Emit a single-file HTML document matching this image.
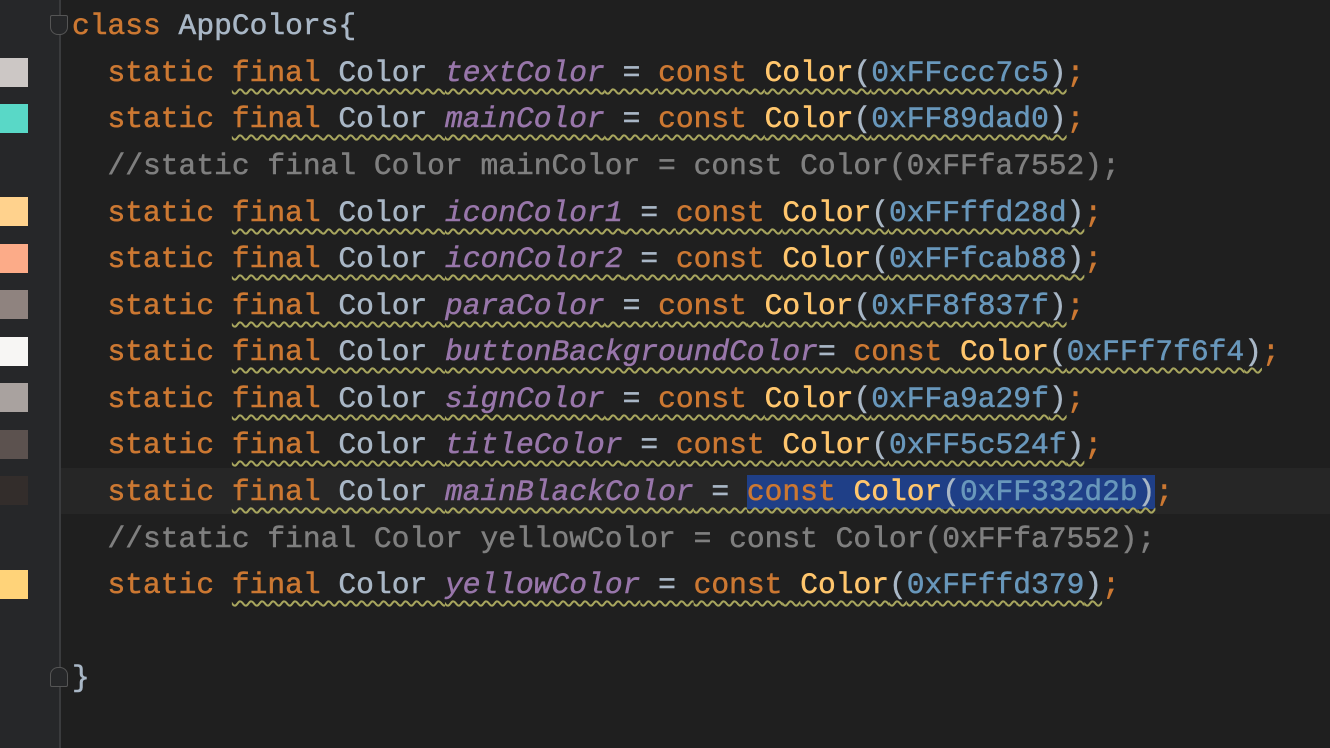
<!DOCTYPE html>
<html><head><style>
body{margin:0;width:1330px;height:748px;background:#1f1f1f;overflow:hidden;position:relative;font-family:"Liberation Mono",monospace;}
.gut{position:absolute;left:0;top:0;width:59px;height:748px;background:#262729;}
.gl{position:absolute;left:59px;top:0;width:2px;height:748px;background:#3a3b3d;}
.cur{position:absolute;left:61px;top:468px;width:1269px;height:46px;background:#262626;}
.sw{position:absolute;left:0;width:28px;height:29px;}
.l{position:absolute;left:72px;height:46px;line-height:46px;font-size:29.6px;white-space:pre;color:#a9b7c6;-webkit-text-stroke:0.5px currentColor;}
.k{color:#cc7832}.c{color:#ffc66d}.n{color:#6897bb}.f{color:#9876aa;font-style:italic}.cm{color:#7f7f7f}
.w{text-decoration:underline wavy #a8a65e;text-decoration-thickness:1.5px;text-underline-offset:7px;}
.sel{background:#1f3f87;}
.fold{position:absolute;left:50px;width:18px;height:20px;border:1.5px solid #555;box-sizing:border-box;background:#262729;}
</style></head><body>
<div class="gut"></div><div class="gl"></div><div class="cur"></div>
<div class="fold" style="top:15px;border-radius:2px 2px 8px 8px"></div>
<div class="fold" style="top:667px;border-radius:8px 8px 2px 2px"></div>
<div class="sw" style="top:58px;background:#ccc7c5"></div>
<div class="sw" style="top:104px;background:#59d8c7"></div>
<div class="sw" style="top:197px;background:#ffd28d"></div>
<div class="sw" style="top:244px;background:#fcab88"></div>
<div class="sw" style="top:290px;background:#8f837f"></div>
<div class="sw" style="top:337px;background:#f7f6f4"></div>
<div class="sw" style="top:383px;background:#a9a29f"></div>
<div class="sw" style="top:430px;background:#5c524f"></div>
<div class="sw" style="top:476px;background:#332d2b"></div>
<div class="sw" style="top:570px;background:#ffd379"></div>
<div class="l" style="top:3px"><span class="k">class</span> AppColors{</div>
<div class="l" style="top:50px">  <span class="k">static</span> <span class="w"><span class="k">final</span> Color <span class="f">textColor</span> = <span class="k">const</span> <span class="c">Color</span>(<span class="n">0xFFccc7c5</span>)</span><span class="k">;</span></div>
<div class="l" style="top:96px">  <span class="k">static</span> <span class="w"><span class="k">final</span> Color <span class="f">mainColor</span> = <span class="k">const</span> <span class="c">Color</span>(<span class="n">0xFF89dad0</span>)</span><span class="k">;</span></div>
<div class="l cm" style="top:143px">  //static final Color mainColor = const Color(0xFFfa7552);</div>
<div class="l" style="top:190px">  <span class="k">static</span> <span class="w"><span class="k">final</span> Color <span class="f">iconColor1</span> = <span class="k">const</span> <span class="c">Color</span>(<span class="n">0xFFffd28d</span>)</span><span class="k">;</span></div>
<div class="l" style="top:236px">  <span class="k">static</span> <span class="w"><span class="k">final</span> Color <span class="f">iconColor2</span> = <span class="k">const</span> <span class="c">Color</span>(<span class="n">0xFFfcab88</span>)</span><span class="k">;</span></div>
<div class="l" style="top:283px">  <span class="k">static</span> <span class="w"><span class="k">final</span> Color <span class="f">paraColor</span> = <span class="k">const</span> <span class="c">Color</span>(<span class="n">0xFF8f837f</span>)</span><span class="k">;</span></div>
<div class="l" style="top:329px">  <span class="k">static</span> <span class="w"><span class="k">final</span> Color <span class="f">buttonBackgroundColor</span>= <span class="k">const</span> <span class="c">Color</span>(<span class="n">0xFFf7f6f4</span>)</span><span class="k">;</span></div>
<div class="l" style="top:376px">  <span class="k">static</span> <span class="w"><span class="k">final</span> Color <span class="f">signColor</span> = <span class="k">const</span> <span class="c">Color</span>(<span class="n">0xFFa9a29f</span>)</span><span class="k">;</span></div>
<div class="l" style="top:422px">  <span class="k">static</span> <span class="w"><span class="k">final</span> Color <span class="f">titleColor</span> = <span class="k">const</span> <span class="c">Color</span>(<span class="n">0xFF5c524f</span>)</span><span class="k">;</span></div>
<div class="l" style="top:469px">  <span class="k">static</span> <span class="w"><span class="k">final</span> Color <span class="f">mainBlackColor</span> = <span class="sel"><span class="k">const</span> <span class="c">Color</span>(<span class="n">0xFF332d2b</span>)</span></span><span class="k">;</span></div>
<div class="l cm" style="top:516px">  //static final Color yellowColor = const Color(0xFFfa7552);</div>
<div class="l" style="top:562px">  <span class="k">static</span> <span class="w"><span class="k">final</span> Color <span class="f">yellowColor</span> = <span class="k">const</span> <span class="c">Color</span>(<span class="n">0xFFffd379</span>)</span><span class="k">;</span></div>
<div class="l" style="top:655px">}</div>
</body></html>
